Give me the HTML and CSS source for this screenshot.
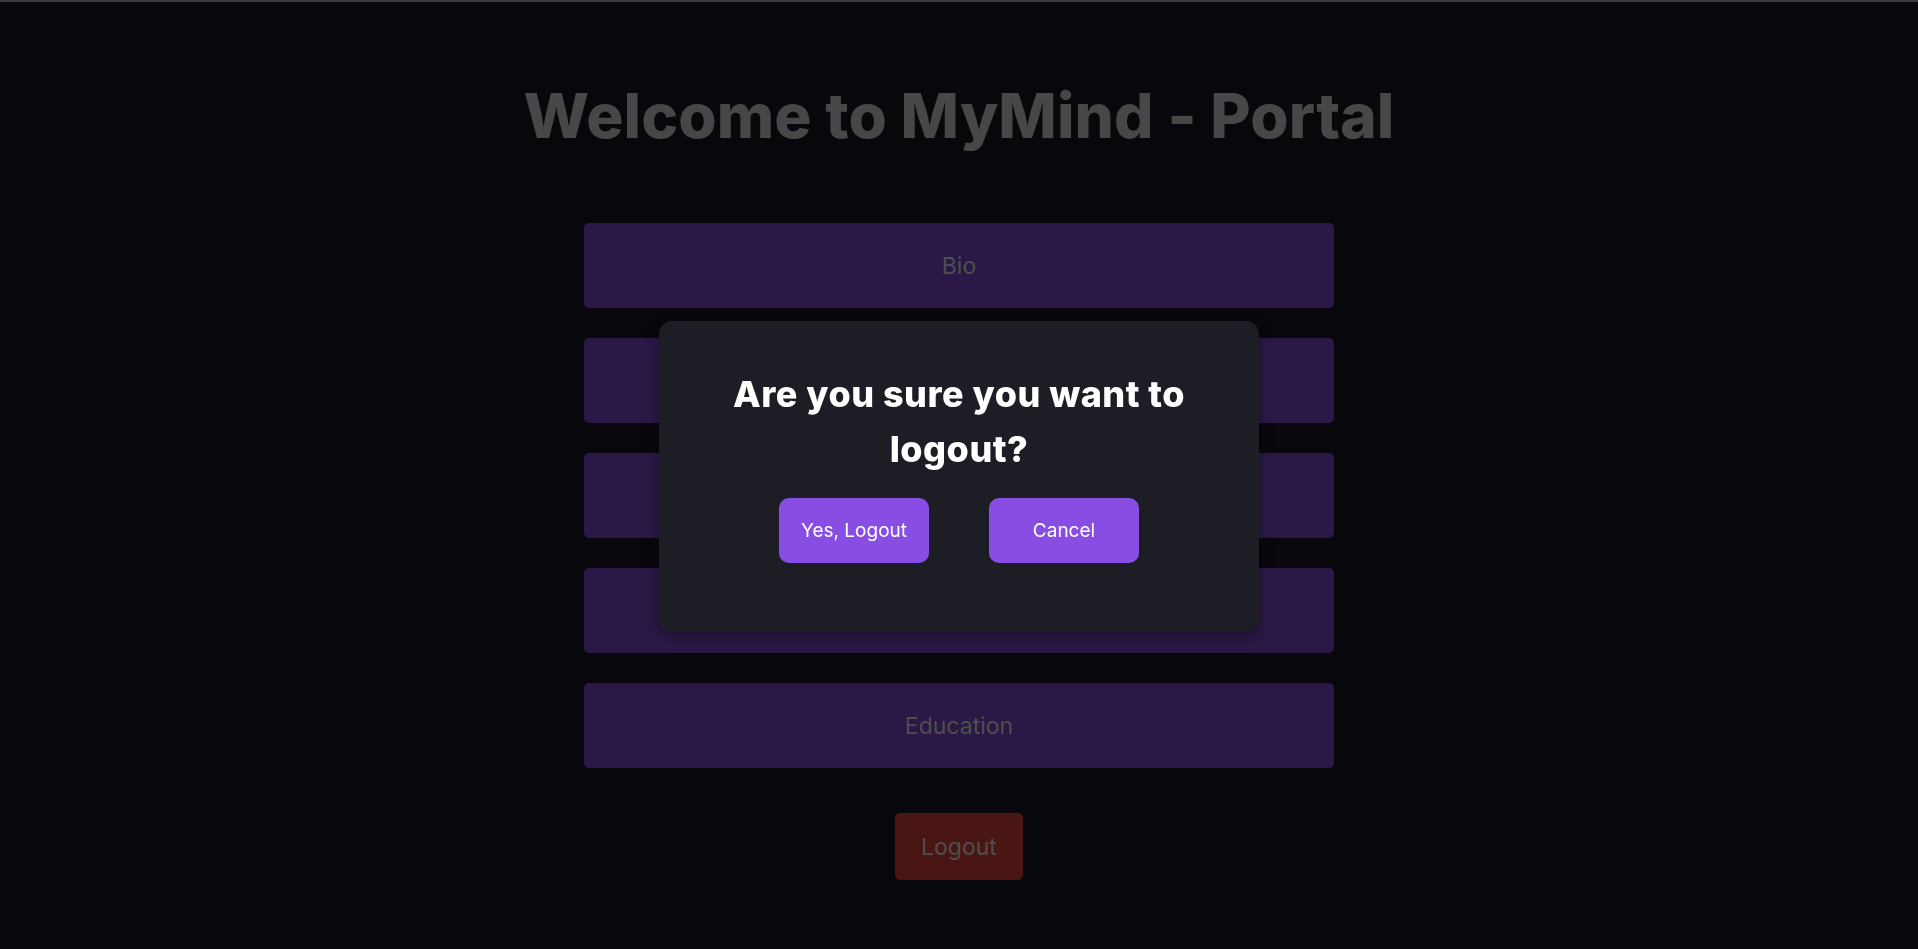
FILE: index.html
```html
<!DOCTYPE html>
<html lang="en">
<head>
<meta charset="utf-8">
<title>MyMind - Portal</title>
<link rel="stylesheet" href="styles.css">
</head>
<body>
<div class="topbar"></div>
<main class="portal">
  <h1 class="title">Welcome to MyMind - Portal</h1>
  <nav class="menu">
    <button class="menu-item">Bio</button>
    <button class="menu-item">Projects</button>
    <button class="menu-item">Skills</button>
    <button class="menu-item">Experience</button>
    <button class="menu-item">Education</button>
  </nav>
  <button class="logout">Logout</button>
</main>
<div class="overlay">
  <div class="modal">
    <h2 class="modal-title">Are you sure you want to logout?</h2>
    <div class="modal-actions">
      <button class="modal-btn">Yes, Logout</button>
      <button class="modal-btn">Cancel</button>
    </div>
  </div>
</div>
</body>
</html>
```
FILE: styles.css
```css
* { box-sizing: border-box; }
html, body { margin: 0; padding: 0; }
body {
  background: #08080c;
  font-family: Inter, "Noto Sans", sans-serif;
  height: 949px;
  overflow: hidden;
}
.topbar {
  height: 2px;
  background: #3c3c3e;
}
.portal {
  display: flex;
  flex-direction: column;
  align-items: center;
}
.title {
  margin: 76px 0 0;
  font-size: 62px;
  font-weight: 800;
  line-height: 76px;
  color: #474747;
  letter-spacing: 0.1px;
}
.menu {
  margin-top: 69px;
  width: 750px;
  display: flex;
  flex-direction: column;
  gap: 30px;
}
.menu-item {
  height: 85px;
  border: none;
  border-radius: 5px;
  background: #2a1846;
  color: #4e4e4e;
  font-family: inherit;
  font-size: 23px;
  font-weight: 400;
}
.logout {
  margin-top: 45px;
  width: 128px;
  height: 67px;
  border: none;
  border-radius: 5px;
  background: #4a1613;
  color: #4e4e4e;
  font-family: inherit;
  font-size: 23px;
}
.overlay {
  position: fixed;
  inset: 0;
  display: flex;
  align-items: center;
  justify-content: center;
  padding-top: 4px;
}
.modal {
  width: 600px;
  height: 311px;
  background: #1d1d25;
  border-radius: 13px;
  box-shadow: 0 4px 14px rgba(0, 0, 0, 0.35);
  padding: 46px 40px 0;
  display: flex;
  flex-direction: column;
  align-items: center;
}
.modal-title {
  margin: 0;
  max-width: 500px;
  text-align: center;
  color: #ffffff;
  font-size: 36px;
  font-weight: 800;
  line-height: 55px;
  letter-spacing: 0.5px;
}
.modal-actions {
  margin-top: 21px;
  display: flex;
  gap: 60px;
}
.modal-btn {
  width: 150px;
  height: 65px;
  border: none;
  border-radius: 10px;
  background: #884ee4;
  color: #ffffff;
  font-family: inherit;
  font-size: 19px;
  font-weight: 400;
}
```
